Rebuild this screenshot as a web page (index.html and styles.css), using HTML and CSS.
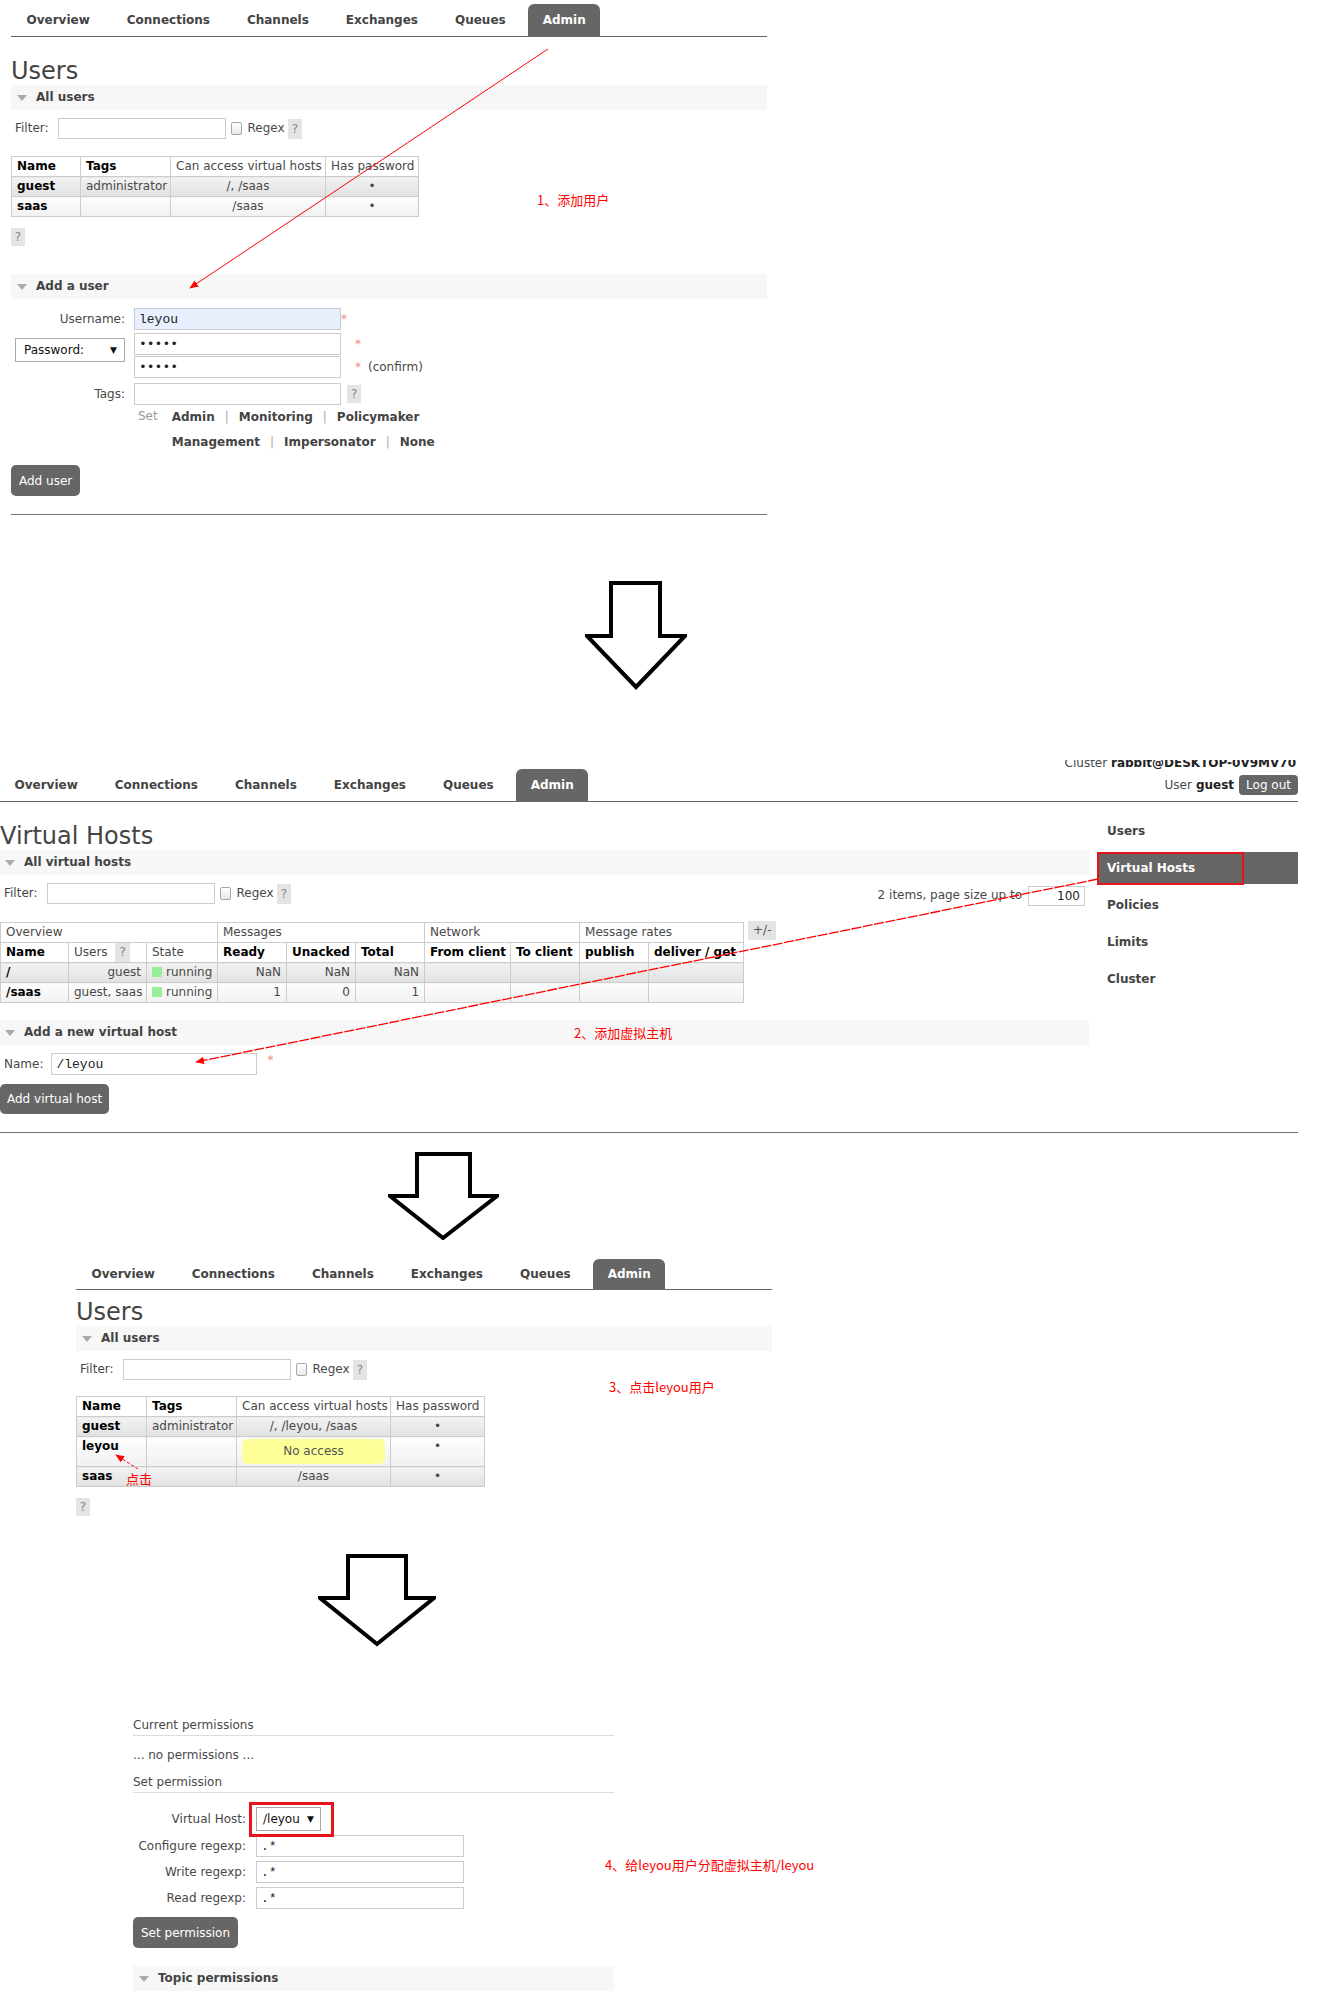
FILE: index.html
```html
<!DOCTYPE html>
<html lang="zh-CN">
<head>
<meta charset="utf-8">
<title>RabbitMQ Admin</title>
<link rel="stylesheet" href="styles.css">
</head>
<body>
<div class="page">

<section class="shot shot1">
  <nav class="tabs t1">
    <span class="tab">Overview</span><span class="tab">Connections</span><span class="tab">Channels</span><span class="tab">Exchanges</span><span class="tab">Queues</span><span class="tab active">Admin</span>
  </nav>
  <h1 class="h1a">Users</h1>
  <div class="bar"><span class="tri"></span>All users</div>
  <div class="filter">
    <span class="lbl">Filter:</span><input class="inp finput" type="text"><span class="cb"></span><span>Regex</span><span class="help hq">?</span>
  </div>
  <table class="list users u1">
    <colgroup><col class="w-name"><col class="w-tags"><col class="w-vh"><col class="w-pw"></colgroup>
    <tr><th>Name</th><th>Tags</th><th class="nb">Can access virtual hosts</th><th class="nb">Has password</th></tr>
    <tr class="alt1"><td class="name">guest</td><td>administrator</td><td class="c">/, /saas</td><td class="c">•</td></tr>
    <tr class="alt2"><td class="name">saas</td><td></td><td class="c">/saas</td><td class="c">•</td></tr>
  </table>
  <div class="help solo">?</div>
  <div class="bar bar-add"><span class="tri"></span>Add a user</div>
  <div class="frow f-user">
    <span class="flbl">Username:</span><input class="inp fin auto" type="text" value="leyou"><span class="ast">*</span>
  </div>
  <div class="frow f-pw">
    <div class="flbl"><span class="sel pwsel">Password:<span class="arr">▼</span></span></div>
    <div class="pwins"><input class="inp fin" type="password" value="guest"><input class="inp fin pw2" type="password" value="guest"></div>
    <div class="pwx"><div class="pl1"><span class="ast">*</span></div><div class="pl2"><span class="ast">*</span><span class="conf">(confirm)</span></div></div>
  </div>
  <div class="frow f-tags">
    <span class="flbl">Tags:</span><input class="inp fin" type="text"><span class="help tg">?</span>
  </div>
  <div class="tagset">
    <span class="set">Set</span>
    <div class="links">
      <div><b>Admin</b><span class="sep">|</span><b>Monitoring</b><span class="sep">|</span><b>Policymaker</b></div>
      <div><b>Management</b><span class="sep">|</span><b>Impersonator</b><span class="sep">|</span><b>None</b></div>
    </div>
  </div>
  <button class="btn b-add">Add user</button>
  <div class="rule"></div>
</section>

<svg class="bigarrow a1" width="102" height="110" viewBox="0 0 102 110"><polygon points="26,2 75,2 75,55 100,55 51,106 2,55 26,55"/></svg>

<section class="shot shot2">
  <div class="clip"><div class="cluster">Cluster <b>rabbit@DESKTOP-0V9MV70</b></div></div>
  <nav class="tabs t2">
    <span class="tab">Overview</span><span class="tab">Connections</span><span class="tab">Channels</span><span class="tab">Exchanges</span><span class="tab">Queues</span><span class="tab active">Admin</span>
    <span class="user">User <b>guest</b><span class="logout">Log out</span></span>
  </nav>
  <div class="layout">
    <main class="main2">
      <h1 class="h1a">Virtual Hosts</h1>
      <div class="bar bar2"><span class="tri"></span>All virtual hosts</div>
      <div class="filter">
        <span class="lbl">Filter:</span><input class="inp finput" type="text"><span class="cb"></span><span>Regex</span><span class="help hq">?</span>
        <span class="pageinfo">2 items, page size up to</span><input class="inp psize" type="text" value="100">
      </div>
      <div class="tblrow">
        <table class="list vh">
          <colgroup><col class="v1"><col class="v2"><col class="v3"><col class="v4"><col class="v5"><col class="v6"><col class="v7"><col class="v8"><col class="v9"><col class="v10"></colgroup>
          <tr class="grp"><th colspan="3">Overview</th><th colspan="3">Messages</th><th colspan="2">Network</th><th colspan="2">Message rates</th></tr>
          <tr><th>Name</th><th class="nb">Users <span class="help hin">?</span></th><th class="nb">State</th><th>Ready</th><th>Unacked</th><th>Total</th><th>From client</th><th>To client</th><th>publish</th><th>deliver / get</th></tr>
          <tr class="alt1"><td class="name">/</td><td class="r">guest</td><td><span class="sq"></span>running</td><td class="r">NaN</td><td class="r">NaN</td><td class="r">NaN</td><td></td><td></td><td></td><td></td></tr>
          <tr class="alt2"><td class="name">/saas</td><td class="r">guest, saas</td><td><span class="sq"></span>running</td><td class="r">1</td><td class="r">0</td><td class="r">1</td><td></td><td></td><td></td><td></td></tr>
        </table>
        <span class="help pm">+/-</span>
      </div>
      <div class="bar bar3"><span class="tri"></span>Add a new virtual host</div>
      <div class="nrow"><span class="lbl">Name:</span><input class="inp nameinp" type="text" value="/leyou"><span class="ast">*</span></div>
      <button class="btn b-vh">Add virtual host</button>
    </main>
    <aside class="side">
      <div>Users</div>
      <div class="on">Virtual Hosts</div>
      <div>Policies</div>
      <div>Limits</div>
      <div>Cluster</div>
    </aside>
  </div>
  <div class="rule"></div>
</section>

<svg class="bigarrow a2" width="111" height="88" viewBox="0 0 111 88"><polygon points="29,2 82,2 82,44 109,44 55,86 2,44 29,44"/></svg>

<section class="shot shot3">
  <nav class="tabs t3">
    <span class="tab">Overview</span><span class="tab">Connections</span><span class="tab">Channels</span><span class="tab">Exchanges</span><span class="tab">Queues</span><span class="tab active">Admin</span>
  </nav>
  <h1 class="h1b">Users</h1>
  <div class="bar"><span class="tri"></span>All users</div>
  <div class="filter">
    <span class="lbl">Filter:</span><input class="inp finput" type="text"><span class="cb"></span><span>Regex</span><span class="help hq">?</span>
  </div>
  <table class="list users u3">
    <colgroup><col class="x-name"><col class="x-tags"><col class="x-vh"><col class="x-pw"></colgroup>
    <tr><th>Name</th><th>Tags</th><th class="nb">Can access virtual hosts</th><th class="nb">Has password</th></tr>
    <tr class="alt1"><td class="name">guest</td><td>administrator</td><td class="c">/, /leyou, /saas</td><td class="c">•</td></tr>
    <tr class="alt2"><td class="name top">leyou</td><td></td><td class="c"><div class="noaccess">No access</div></td><td class="c top">•</td></tr>
    <tr class="alt1"><td class="name">saas</td><td></td><td class="c">/saas</td><td class="c">•</td></tr>
  </table>
  <div class="help solo">?</div>
</section>

<svg class="bigarrow a3" width="118" height="94" viewBox="0 0 118 94"><polygon points="30,2 88,2 88,44 116,44 59,90 2,44 30,44"/></svg>

<section class="shot shot4">
  <div class="ph">Current permissions</div>
  <p class="noperm">... no permissions ...</p>
  <div class="ph ph2">Set permission</div>
  <div class="prow pfirst"><span class="plbl">Virtual Host:</span><span class="sel vsel">/leyou<span class="arr">▼</span></span></div>
  <div class="prow"><span class="plbl">Configure regexp:</span><input class="inp pinp" type="text" value=".*"></div>
  <div class="prow"><span class="plbl">Write regexp:</span><input class="inp pinp" type="text" value=".*"></div>
  <div class="prow"><span class="plbl">Read regexp:</span><input class="inp pinp" type="text" value=".*"></div>
  <button class="btn b-perm">Set permission</button>
  <div class="bar bar4"><span class="tri"></span>Topic permissions</div>
</section>

<svg class="annot" width="1328" height="2000" viewBox="0 0 1328 2000">
  <defs>
    <marker id="ah" viewBox="0 0 10 10" refX="9" refY="5" markerWidth="9" markerHeight="9" markerUnits="userSpaceOnUse" orient="auto"><path d="M0,1 L10,5 L0,9 z" fill="#f00"/></marker>
  </defs>
  <line class="l1" x1="548" y1="49" x2="190" y2="288" marker-end="url(#ah)"/>
  <text class="note" x="537" y="205">1、添加用户</text>
  <rect class="box2" x="1098" y="853" width="145" height="31"/>
  <line class="l2" x1="1098" y1="879" x2="196" y2="1062" marker-end="url(#ah)"/>
  <text class="note" x="574" y="1038">2、添加虚拟主机</text>
  <text class="note" x="609" y="1392">3、点击leyou用户</text>
  <line class="l3" x1="138" y1="1469" x2="116" y2="1455" marker-end="url(#ah)"/>
  <text class="note" x="126" y="1484">点击</text>
  <rect class="box4" x="250.5" y="1803.5" width="82" height="32"/>
  <text class="note" x="605" y="1870">4、给leyou用户分配虚拟主机/leyou</text>
</svg>

</div>
</body>
</html>
```

FILE: styles.css
```css
* { box-sizing: border-box; }
html, body { margin: 0; padding: 0; background: #fff; }
body {
  font-family: "DejaVu Sans", Verdana, sans-serif;
  font-size: 12px;
  line-height: 15px;
  color: #484848;
}
.page { position: relative; width: 1328px; height: 2000px; overflow: hidden; }

/* sections */
.shot1 { margin-left: 11px; width: 756px; }
.shot2 { margin-top: 69px; width: 1298px; }
.shot3 { margin-top: 19px; margin-left: 76px; width: 696px; }
.shot4 { margin-top: 70px; margin-left: 133px; width: 481px; }

/* tabs */
.tabs { display: flex; align-items: flex-end; border-bottom: 1px solid #666; }
.t1 { height: 37px; padding-top: 4px; }
.t2 { height: 33px; }
.t3 { height: 31px; }
.tab {
  height: 32px; line-height: 32px; padding: 0 14.5px; margin-right: 8px;
  font-weight: bold; color: #444; border-radius: 6px 6px 0 0;
}
.t1 .tab:first-child, .t3 .tab:first-child { padding-left: 15.5px; }
.t3 .tab { height: 30px; line-height: 30px; }
.tab.active { background: #666; color: #fff; }
.user { margin-left: auto; align-self: center; display: flex; align-items: center; color: #484848; }
.user b { color: #222; margin-left: 4px; }
.logout {
  background: #666; color: #fff; border-radius: 4px; height: 20px; line-height: 20px;
  padding: 0 7px; margin-left: 5px;
}
.clip { height: 9px; overflow: hidden; }
.cluster { margin-top: -4px; line-height: 14px; text-align: right; padding-right: 2px; color: #484848; }
.cluster b { color: #222; }

/* headings */
h1 { font-size: 24px; line-height: 28px; font-weight: normal; color: #444; margin: 0; }
.h1a { margin-top: 20px; }
.h1b { margin-top: 8px; }

.bar {
  height: 25px; background: #f7f7f7; display: flex; align-items: center;
  font-weight: bold; color: #444;
}
.tri {
  width: 0; height: 0; border-left: 5px solid transparent; border-right: 5px solid transparent;
  border-top: 6px solid #aaa; margin: 0 9px 0 6px;
}
.bar2 .tri, .bar3 .tri { margin-left: 5px; }
.bar-add { margin-top: 28px; }
.bar3 { margin-top: 17px; }
.bar4 { margin-top: 18px; }

/* filter */
.filter { display: flex; align-items: center; height: 21px; margin-top: 8px; padding-left: 4px; }
.lbl { margin-right: 9px; }
.inp {
  height: 22px; border: 1px solid #ccc; background: #fff; padding: 0 4px; margin: 0;
  font: 13px "Liberation Mono", monospace; color: #222; outline: none;
}
.finput { width: 168px; height: 21px; }
.cb {
  width: 11px; height: 13px; border: 1px solid #a6a6a6; border-radius: 2px;
  margin: 0 6px 0 5px; background: linear-gradient(#fff, #e8e8e8);
}
.help {
  display: inline-block; background: #e4e4e4; color: #888;
  padding: 0 4px; height: 20px; line-height: 20px;
}
.hq { margin-left: 3px; }
.pageinfo { margin-left: auto; margin-right: 6px; align-self: flex-start; margin-top: 5px; }
.psize {
  width: 57px; height: 20px; align-self: flex-start; margin-top: 3px; margin-right: 4px;
  text-align: right; font: 12px "DejaVu Sans", sans-serif; color: #222;
}

/* tables */
table.list { border-collapse: collapse; table-layout: fixed; }
.list th, .list td {
  border: 1px solid #ccc; padding: 2px 5px; line-height: 15px;
  white-space: nowrap; overflow: hidden; text-align: left;
}
.list th { font-weight: bold; color: #000; background: #fff; }
.list th.nb, .list tr.grp th { font-weight: normal; color: #484848; }
.list tr.alt1 td { background: linear-gradient(#f3f3f3, #e1e1e1); }
.list tr.alt2 td { background: linear-gradient(#fdfdfd, #f1f1f1); }
.list td.name { font-weight: bold; color: #000; }
.list td.c { text-align: center; }
.list td.r { text-align: right; }
.list td.top { vertical-align: top; }
.u1 { margin-top: 17px; width: 407px; }
.u3 { margin-top: 16px; width: 408px; }
.w-name { width: 69px; } .w-tags { width: 90px; } .w-vh { width: 155px; } .w-pw { width: 93px; }
.x-name { width: 70px; } .x-tags { width: 90px; } .x-vh { width: 154px; } .x-pw { width: 94px; }
.vh { width: 743px; }
.v1 { width: 68px; } .v2 { width: 78px; } .v3 { width: 71px; } .v4 { width: 69px; } .v5 { width: 69px; }
.v6 { width: 69px; } .v7 { width: 86px; } .v8 { width: 69px; } .v9 { width: 69px; } .v10 { width: 95px; }
.hin { height: 19px; line-height: 19px; margin: -2px 0 -2px 4px; vertical-align: top; }
.sq { display: inline-block; width: 10px; height: 10px; background: #99ee99; margin-right: 4px; vertical-align: -1px; }
.tblrow { display: flex; align-items: flex-start; margin-top: 18px; }
.pm { margin-left: 4px; margin-top: -1px; padding: 0 5px; height: 19px; line-height: 19px; color: #555; }
.noaccess {
  height: 25px; line-height: 25px; background: #ffff99; border-radius: 5px; color: #555;
}
.help.solo { display: block; width: 14px; height: 18px; line-height: 18px; margin-top: 11px; padding: 0; text-align: center; }

/* add user form */
.frow { display: flex; align-items: center; }
.flbl { width: 114px; text-align: right; margin-right: 9px; flex: none; }
.fin { width: 207px; }
.auto { background: #e8f0fe; border-color: #c5cad3; }
.f-user { margin-top: 9px; }
.f-pw { margin-top: 3px; align-items: flex-start; }
.f-tags { margin-top: 5px; }
.pwsel { margin-top: 5px; margin-left: 4px; }
.pwins { display: flex; flex-direction: column; }
.pw2 { margin-top: 1px; }
.pwx { margin-left: 14px; }
.pl1 { height: 23px; display: flex; align-items: center; }
.pl2 { height: 22px; display: flex; align-items: center; }
.ast { color: #f08a8a; }
.conf { margin-left: 7px; }
.tg { margin-left: 6px; height: 18px; line-height: 18px; }
.sel {
  display: inline-flex; justify-content: space-between; align-items: center;
  height: 24px; border: 1px solid #a9a9a9; background: #fff; color: #111;
  text-align: left; font-size: 12px;
}
.pwsel { width: 110px; padding: 0 7px 0 8px; }
.arr { font-size: 9px; color: #111; }
.tagset { display: flex; margin-left: 127px; }
.set { color: #999; margin-right: 14px; line-height: 22px; }
.links { line-height: 25px; }
.links b { color: #444; }
.sep { color: #aaa; margin: 0 10px; }

.btn {
  display: block; background: #666; color: #fff; border: 0; border-radius: 5px;
  font: 12px "DejaVu Sans", Verdana, sans-serif; padding: 0 8px; height: 31px; margin: 0; cursor: pointer;
}
.b-add { margin-top: 10px; }
.b-vh { margin-top: 9px; height: 30px; padding: 0 7px; }
.b-perm { margin-top: 8px; }
.rule { border-top: 1px solid #6f6f6f; margin-top: 18px; }

/* vhost page */
.layout { display: flex; align-items: flex-start; }
.main2 { width: 1089px; flex: none; }
.nrow { display: flex; align-items: center; margin-top: 8px; padding-left: 4px; }
.nrow .lbl { margin-right: 8px; }
.nameinp { width: 206px; }
.nrow .ast { margin-left: 10px; align-self: flex-start; }
.side { width: 201px; margin-left: 8px; padding-top: 13px; }
.side div {
  height: 32px; line-height: 32px; padding-left: 10px; margin-bottom: 5px;
  font-weight: bold; color: #444;
}
.side .on { background: #666; color: #fff; border-radius: 4px 0 0 4px; }

/* permissions */
.ph { color: #484848; padding-bottom: 2px; border-bottom: 1px solid #dcdcdc; }
.noperm { margin: 12px 0 0; }
.ph2 { margin-top: 12px; }
.prow { display: flex; align-items: center; margin-top: 4px; }
.pfirst { margin-top: 14px; }
.plbl { width: 113px; text-align: right; margin-right: 10px; flex: none; }
.vsel { width: 65px; padding: 0 6px; }
.pinp { width: 208px; }

/* big arrows */
.bigarrow { display: block; }
.bigarrow polygon { fill: #fff; stroke: #000; stroke-width: 4; stroke-linejoin: miter; }
.a1 { margin-top: 66px; margin-left: 585px; }
.a2 { margin-top: 19px; margin-left: 388px; }
.a3 { margin-top: 38px; margin-left: 318px; }

/* annotation overlay */
.annot { position: absolute; left: 0; top: 0; pointer-events: none; }
.annot line { stroke: #f00; fill: none; }
.l1 { stroke-width: 1; }
.l2 { stroke-width: 1.3; stroke-dasharray: 10 1.5; }
.l3 { stroke-width: 1; stroke-dasharray: 3 2; }
.annot rect { fill: none; stroke: #e8141c; }
.box2 { stroke-width: 2; }
.box4 { stroke-width: 3; }
.note { fill: #f00; font-family: "Noto Sans CJK SC", "DejaVu Sans", sans-serif; font-size: 13px; }
```
